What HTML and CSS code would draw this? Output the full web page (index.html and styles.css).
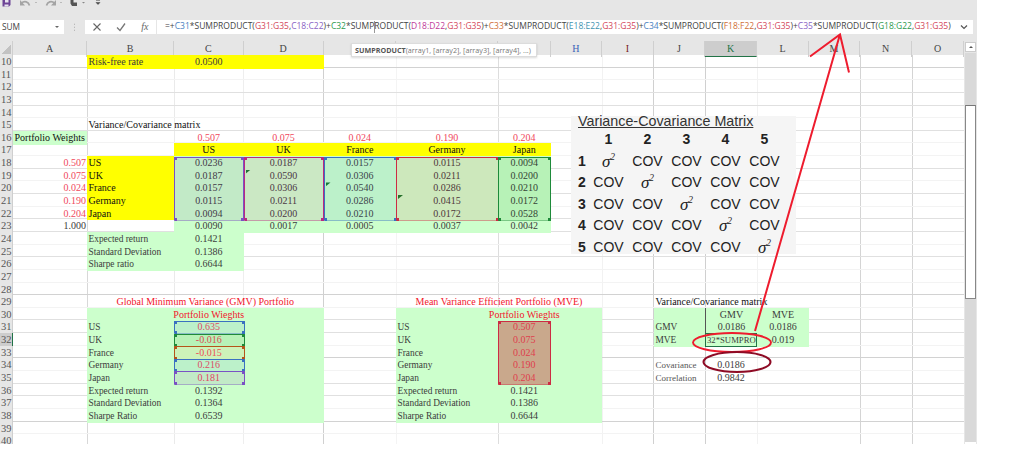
FILE: index.html
```html
<!DOCTYPE html>
<html lang="en">
<head>
<meta charset="utf-8">
<title>Portfolio workbook</title>
<link rel="stylesheet" href="styles.css">
</head>
<body>
<div class="app">
  <header class="chrome">
    <div class="quick-bar">
      <svg class="qa-icons" width="110" height="8" viewBox="0 0 110 8">
        <path d="M2.500 0h8v5l-1.500 1.500H2.500z" fill="#6d4496"/><path d="M5 0h3.500v2.500H5zM4.500 4.500h4v2h-4z" fill="#e8e4ee"/>
        <path d="M21.500 3c3-2.500 7-1.500 8 2.500" fill="none" stroke="#a4a4a4" stroke-width="1.700"/><path d="M20 0v5.500h5z" fill="#a4a4a4"/>
        <path d="M35 2.500h2" stroke="#bbb"/>
        <path d="M54.500 3c-3-2.500-7-1.500-8 2.500" fill="none" stroke="#a4a4a4" stroke-width="1.700"/><path d="M56 0v5.500h-5z" fill="#a4a4a4"/>
        <path d="M60 2.500h2" stroke="#bbb"/>
        <path d="M70.500 0h3v2.500h3.500v3.500h-5l-1.500-2.500z" fill="#555"/><path d="M82 2h3l-1.500 1.500z" fill="#888"/>
        <path d="M96 .500h4M96 2.500h4l-2 2z" fill="#444" stroke="#444" stroke-width=".5"/>
      </svg>
    </div>
    <div class="formula-row">
      <div class="name-box"><span>SUM</span><i class="caret-down"></i></div>
      <div class="grip"></div>
      <div class="fx-box">
        <svg width="10" height="10" viewBox="0 0 10 10"><path d="M1.500 1.500l7 7M8.500 1.500l-7 7" stroke="#666" stroke-width="1.100"/></svg>
        <svg width="10" height="10" viewBox="0 0 10 10"><path d="M1 5.500l3 3 5-7" fill="none" stroke="#777" stroke-width="1.300"/></svg>
        <span class="fx">fx</span>
      </div>
      <div class="formula"><span class="formula-text">=+<span class="f-blue">C31</span>*SUMPRODUCT(<span class="f-red">G31:G35</span>,<span class="f-purple">C18:C22</span>)+<span class="f-green">C32</span>*SUMP<i class="caret"></i>RODUCT(<span class="f-pink">D18:D22</span>,<span class="f-red">G31:G35</span>)+<span class="f-orange">C33</span>*SUMPRODUCT(<span class="f-teal">E18:E22</span>,<span class="f-red">G31:G35</span>)+<span class="f-blue">C34</span>*SUMPRODUCT(<span class="f-orange">F18:F22</span>,<span class="f-red">G31:G35</span>)+<span class="f-purple">C35</span>*SUMPRODUCT(<span class="f-green">G18:G22</span>,<span class="f-red">G31:G35</span>)</span>
        <svg class="chev" width="8" height="6" viewBox="0 0 8 6"><path d="M1 1.500l3 3 3-3" fill="none" stroke="#555" stroke-width="1.200"/></svg>
      </div>
    </div>
  </header>

  <div class="workspace">
    <main class="sheet">
      <div class="col-heads">
        <div class="corner"></div>
        <div>A</div><div>B</div><div>C</div><div>D</div><div></div><div></div><div></div><div class="h-blue">H</div><div class="h-red">I</div><div>J</div><div class="selected">K</div><div>L</div><div>M</div><div>N</div><div>O</div>
      </div>

      <div class="row line-s"><div class="rh">10</div><div class="cell col-b yellow">Risk-free rate</div><div class="cell col-c yellow num">0.0500</div><div class="cell col-d yellow"></div></div>
      <div class="row line-f"><div class="rh">11</div></div>
      <div class="row line-m"><div class="rh">12</div></div>
      <div class="row line-m"><div class="rh">13</div></div>
      <div class="row line-f"><div class="rh">14</div></div>
      <div class="row line-m"><div class="rh">15</div><div class="cell col-b dark">Variance/Covariance matrix</div></div>
      <div class="row line-f"><div class="rh">16</div><div class="cell col-a green dark">Portfolio Weights</div><div class="cell col-c num red">0.507</div><div class="cell col-d num red">0.075</div><div class="cell col-e num red">0.024</div><div class="cell col-f num red">0.190</div><div class="cell col-g num red">0.204</div></div>
      <div class="row line-f"><div class="rh">17</div><div class="cell col-c yellow num dark">US</div><div class="cell col-d yellow num dark">UK</div><div class="cell col-e yellow num dark">France</div><div class="cell col-f yellow num dark">Germany</div><div class="cell col-g yellow num dark">Japan</div></div>
      <div class="row line-m"><div class="rh">18</div><div class="cell col-a end red">0.507</div><div class="cell col-b yellow dark">US</div><div class="cell col-c green num">0.0236</div><div class="cell col-d green num">0.0187</div><div class="cell col-e green num">0.0157</div><div class="cell col-f green num">0.0115</div><div class="cell col-g green num">0.0094</div></div>
      <div class="row line-f"><div class="rh">19</div><div class="cell col-a end red">0.075</div><div class="cell col-b yellow dark">UK</div><div class="cell col-c green num">0.0187</div><div class="cell col-d green num flag">0.0590</div><div class="cell col-e green num">0.0306</div><div class="cell col-f green num">0.0211</div><div class="cell col-g green num">0.0200</div></div>
      <div class="row line-m"><div class="rh">20</div><div class="cell col-a end red">0.024</div><div class="cell col-b yellow dark">France</div><div class="cell col-c green num">0.0157</div><div class="cell col-d green num">0.0306</div><div class="cell col-e green num flag">0.0540</div><div class="cell col-f green num">0.0286</div><div class="cell col-g green num">0.0210</div></div>
      <div class="row line-f"><div class="rh">21</div><div class="cell col-a end red">0.190</div><div class="cell col-b yellow dark">Germany</div><div class="cell col-c green num">0.0115</div><div class="cell col-d green num">0.0211</div><div class="cell col-e green num">0.0286</div><div class="cell col-f green num flag">0.0415</div><div class="cell col-g green num">0.0172</div></div>
      <div class="row line-m"><div class="rh">22</div><div class="cell col-a end red">0.204</div><div class="cell col-b yellow dark">Japan</div><div class="cell col-c green num">0.0094</div><div class="cell col-d green num">0.0200</div><div class="cell col-e green num">0.0210</div><div class="cell col-f green num">0.0172</div><div class="cell col-g green num">0.0528</div></div>
      <div class="row line-m"><div class="rh">23</div><div class="cell col-a end">1.000</div><div class="cell col-c green num">0.0090</div><div class="cell col-d green num">0.0017</div><div class="cell col-e green num">0.0005</div><div class="cell col-f green num">0.0037</div><div class="cell col-g green num">0.0042</div></div>
      <div class="row line-f"><div class="rh">24</div><div class="cell col-b green">Expected return</div><div class="cell col-c green num">0.1421</div></div>
      <div class="row line-m"><div class="rh">25</div><div class="cell col-b green">Standard Deviation</div><div class="cell col-c green num">0.1386</div></div>
      <div class="row line-f"><div class="rh">26</div><div class="cell col-b green">Sharpe ratio</div><div class="cell col-c green num">0.6644</div></div>
      <div class="row line-f"><div class="rh">27</div></div>
      <div class="row line-s"><div class="rh">28</div></div>
      <div class="row line-f"><div class="rh">29</div><div class="cell span-bd num red">Global Minimum Variance (GMV) Portfolio</div><div class="cell span-fh num red">Mean Variance Efficient Portfolio (MVE)</div><div class="cell col-j dark">Variance/Covariance matrix</div></div>
      <div class="row line-m"><div class="rh">30</div><div class="cell col-b green"></div><div class="cell col-c green num bright">Portfolio Wieghts</div><div class="cell col-d green"></div><div class="cell col-f green"></div><div class="cell col-g green num bright">Portfolio Wieghts</div><div class="cell col-h green"></div><div class="cell col-j green rule-b"></div><div class="cell col-k green num rule-b rule-l">GMV</div><div class="cell col-l green num rule-b">MVE</div></div>
      <div class="row line-m"><div class="rh">31</div><div class="cell col-b green">US</div><div class="cell col-c green num red">0.635</div><div class="cell col-d green"></div><div class="cell col-f green">US</div><div class="cell col-g green num red">0.507</div><div class="cell col-h green"></div><div class="cell col-j green">GMV</div><div class="cell col-k green num rule-l">0.0186</div><div class="cell col-l green num">0.0186</div></div>
      <div class="row line-f"><div class="rh rh-selected">32</div><div class="cell col-b green">UK</div><div class="cell col-c green num red">-0.016</div><div class="cell col-d green"></div><div class="cell col-f green">UK</div><div class="cell col-g green num red">0.075</div><div class="cell col-h green"></div><div class="cell col-j green">MVE</div><div class="cell col-k green active">32*SUMPRO</div><div class="cell col-l green num">0.019</div></div>
      <div class="row line-s"><div class="rh">33</div><div class="cell col-b green">France</div><div class="cell col-c green num red">-0.015</div><div class="cell col-d green"></div><div class="cell col-f green">France</div><div class="cell col-g green num red">0.024</div><div class="cell col-h green"></div></div>
      <div class="row line-f"><div class="rh">34</div><div class="cell col-b green">Germany</div><div class="cell col-c green num red">0.216</div><div class="cell col-d green"></div><div class="cell col-f green">Germany</div><div class="cell col-g green num red">0.190</div><div class="cell col-h green"></div><div class="cell col-j note">Covariance</div><div class="cell col-k num">0.0186</div></div>
      <div class="row line-m"><div class="rh">35</div><div class="cell col-b green">Japan</div><div class="cell col-c green num red">0.181</div><div class="cell col-d green"></div><div class="cell col-f green">Japan</div><div class="cell col-g green num red">0.204</div><div class="cell col-h green"></div><div class="cell col-j note">Correlation</div><div class="cell col-k num">0.9842</div></div>
      <div class="row line-m"><div class="rh">36</div><div class="cell col-b green">Expected return</div><div class="cell col-c green num">0.1392</div><div class="cell col-d green"></div><div class="cell col-f green">Expected return</div><div class="cell col-g green num">0.1421</div><div class="cell col-h green"></div></div>
      <div class="row line-f"><div class="rh">37</div><div class="cell col-b green">Standard Deviation</div><div class="cell col-c green num">0.1364</div><div class="cell col-d green"></div><div class="cell col-f green">Standard Deviation</div><div class="cell col-g green num">0.1386</div><div class="cell col-h green"></div></div>
      <div class="row line-s"><div class="rh">38</div><div class="cell col-b green">Sharpe Ratio</div><div class="cell col-c green num">0.6539</div><div class="cell col-d green"></div><div class="cell col-f green">Sharpe Ratio</div><div class="cell col-g green num">0.6644</div><div class="cell col-h green"></div></div>
      <div class="row line-f"><div class="rh">39</div></div>
      <div class="row line-f"><div class="rh">40</div></div>

      <div class="range r-purple rng-c18"></div>
      <div class="range r-pink rng-d18"></div>
      <div class="range r-blue rng-e18"></div>
      <div class="range r-red rng-f18"></div>
      <div class="range r-green rng-g18"></div>
      <div class="range r-blue rng-c31"></div>
      <div class="range r-green rng-c32"></div>
      <div class="range r-orange rng-c33"></div>
      <div class="range r-blue rng-c34"></div>
      <div class="range r-purple rng-c35"></div>
      <div class="range r-brown rng-g31"></div>
    </main>
    <aside class="scrollbar">
      <div class="sb-up"><i></i></div>
      <div class="sb-track"><div class="sb-thumb"></div></div>
      <div class="sb-down"></div>
    </aside>
  </div>

  <div class="tooltip"><b>SUMPRODUCT</b>(array1, [array2], [array3], [array4], ...)</div>

  <figure class="picture">
    <figcaption>Variance-Covariance Matrix</figcaption>
    <div class="matrix">
      <b></b><b>1</b><b>2</b><b>3</b><b>4</b><b>5</b>
      <b>1</b><i>σ<sup>2</sup></i><span>COV</span><span>COV</span><span>COV</span><span>COV</span>
      <b>2</b><span>COV</span><i>σ<sup>2</sup></i><span>COV</span><span>COV</span><span>COV</span>
      <b>3</b><span>COV</span><span>COV</span><i>σ<sup>2</sup></i><span>COV</span><span>COV</span>
      <b>4</b><span>COV</span><span>COV</span><span>COV</span><i>σ<sup>2</sup></i><span>COV</span>
      <b>5</b><span>COV</span><span>COV</span><span>COV</span><span>COV</span><i>σ<sup>2</sup></i>
    </div>
  </figure>

  <svg class="annotations" width="1024" height="467" viewBox="0 0 1024 467">
    <ellipse cx="732" cy="342.500" rx="39" ry="9.500" fill="none" stroke="#ee1c2e" stroke-width="1.900"/>
    <ellipse cx="737" cy="362" rx="33.500" ry="10" fill="none" stroke="#8e0b25" stroke-width="2.100"/>
    <path d="M755 331L839.500 36M810 56.500L840 34.500L849 72.500" fill="none" stroke="#ee1c2e" stroke-width="2"/>
  </svg>
</div>
</body>
</html>
```
FILE: styles.css
```css
* { box-sizing: border-box; }
html, body { margin: 0; padding: 0; }
body { width: 1024px; height: 467px; overflow: hidden; background: #fff; font-family: "Liberation Serif", "Times New Roman", serif; }

.app { position: relative; width: 1024px; height: 467px; }

/* ribbon fragments */
.chrome { width: 977px; height: 41px; background: #e6e6e6; display: flex; flex-direction: column; }
.quick-bar { height: 19.500px; }
.qa-icons { display: block; }
.formula-row { display: flex; align-items: stretch; height: 14.500px; font-family: "Open Sans", "Noto Sans", sans-serif; font-size: 8.300px; color: #444; }
.name-box { width: 64px; background: #fff; display: flex; align-items: center; justify-content: space-between; padding: 0 5px 0 2px; }
.caret-down { width: 0; height: 0; border: 2px solid transparent; border-top-color: #666; margin-top: 2px; }
.grip { width: 20.500px; background: radial-gradient(circle, #aaa 0.600px, transparent 0.800px) center / 3px 3px repeat-y; margin: 3px 0; }
.fx-box { width: 71px; background: #fff; display: flex; align-items: center; justify-content: space-between; padding: 0 7px 0 7px; }
.fx { font-family: "Liberation Serif", serif; font-style: italic; font-size: 10px; color: #666; }
.formula { width: 816px; margin-left: 1.500px; background: #fff; display: flex; align-items: center; justify-content: space-between; padding: 0 5px 0 8px; }
.formula-text { white-space: nowrap; font-size: 8.510px; }
.caret { display: inline-block; width: 0; height: 12px; border-left: 1px solid #999; vertical-align: middle; margin-right: -1px; }
.f-blue { color: #4a7fc1; } .f-red { color: #d3475a; } .f-purple { color: #8a63c4; }
.f-green { color: #2e9a50; } .f-pink { color: #c0399a; } .f-orange { color: #d0703a; } .f-teal { color: #3f93b0; }

/* sheet */
.workspace { display: flex; width: 977px; height: 403px; background: #e6e6e6; }
.sheet {
  position: relative; width: 964px; height: 403px; overflow: hidden; background-color: #fff;
  background-image:
    linear-gradient(#d8d8d8, #d8d8d8), linear-gradient(#eaeaea, #eaeaea), linear-gradient(#eee, #eee), linear-gradient(#d0d0d0, #d0d0d0),
    linear-gradient(#f4f4f4, #f4f4f4), linear-gradient(#ddd, #ddd), linear-gradient(#d0d0d0, #d0d0d0), linear-gradient(#d0d0d0, #d0d0d0),
    linear-gradient(#f2f2f2, #f2f2f2), linear-gradient(#f2f2f2, #f2f2f2), linear-gradient(#d4d4d4, #d4d4d4), linear-gradient(#d4d4d4, #d4d4d4);
  background-repeat: no-repeat;
  background-size: 1px 100%;
  background-position: 86.500px 0, 173.500px 0, 243px 0, 323px 0, 395.500px 0, 498px 0, 653px 0, 705px 0, 601.500px 0, 757px 0, 860px 0, 912px 0;
}
.col-heads, .row {
  display: grid;
  grid-template-columns: 13px 74px 87px 69.500px 80px 72.500px 102px 52.500px 51.500px 52px 51px 52px 52px 51px 52px 52px;
}
.col-heads { height: 14px; background: #e6e6e6; font-size: 10px; line-height: 15px; color: #444; text-align: center; }
.col-heads > div { border-right: 1px solid #cfcfcf; }
.col-heads .corner { background: linear-gradient(135deg, transparent 50%, #c2c2c2 50%) 2px 3px / 9px 10px no-repeat; }
.col-heads .selected { background: #cdcdcd; border-bottom: 1px solid #217346; color: #217346; }
.h-blue { color: #3a62b8; } .h-red { color: #7a1a1a; }

.row {
  height: 12.650px; font-size: 10px; line-height: 12.650px; color: #3c3c3c;
  background: linear-gradient(var(--line), var(--line)) left bottom / 100% 1px no-repeat;
}
.line-s { --line: #d2d2d2; } .line-m { --line: #e0e0e0; } .line-f { --line: #f3f3f3; }
.rh { grid-column: 1; background: #e6e6e6; color: #555; font-size: 10.500px; padding: 1px 0 0 1px; white-space: nowrap; overflow: hidden; border-right: 1px solid #cfcfcf; }
.rh-selected { background: #cdcdcd; border-right: 1px solid #217346; }

.cell { position: relative; padding: 1px 1.500px 0; white-space: nowrap; }
.col-a { grid-column: 2; } .col-b { grid-column: 3; } .col-c { grid-column: 4; } .col-d { grid-column: 5; } .col-e { grid-column: 6; }
.col-f { grid-column: 7; } .col-g { grid-column: 8; } .col-h { grid-column: 9; } .col-j { grid-column: 11; } .col-k { grid-column: 12; } .col-l { grid-column: 13; }
.span-bd { grid-column: 3 / 6; } .span-fh { grid-column: 7 / 10; }
.num { display: flex; justify-content: center; }
.end { text-align: right; padding-right: 1px; }
.yellow { background: #ffff00; }
.green { background: #ccffcc; }
.green:not(.num):not(.dark) { font-size: 9.400px; }
.dark { color: #111; }
.red { color: #f0485c; }
.bright { color: #f2152c; z-index: 1; }
.note { font-size: 9px; color: #555; }
.span-bd.red, .span-fh.red { color: #f2152c; }
.rule-b { box-shadow: inset 0 -1px 0 #555; }
.rule-l { border-left: 1px solid #555; }
.active { overflow: hidden; outline: 1px solid #217346; outline-offset: -1px; background: #ccffcc; }
.green.active:not(.num):not(.dark) { font-size: 8.700px; padding-left: 2px; padding-right: 0; }
.flag::before { content: ""; position: absolute; left: 2px; top: 1px; width: 5px; height: 4px; background: #147a2c; clip-path: polygon(0 0, 100% 0, 0 100%); }

/* formula reference ranges */
.range {
  position: absolute; border: 1px solid var(--c); pointer-events: none;
  border-bottom-color: color-mix(in srgb, var(--c) 40%, transparent);
  background-image: linear-gradient(var(--c), var(--c)), linear-gradient(var(--c), var(--c)), linear-gradient(var(--c), var(--c)), linear-gradient(var(--c), var(--c));
  background-size: 3px 3px; background-repeat: no-repeat;
  background-position: -1px -1px, calc(100% + 1px) -1px, -1px calc(100% + 1px), calc(100% + 1px) calc(100% + 1px);
  background-color: var(--t);
  background-origin: padding-box;
}
.r-purple { --c: #7a50c4; --t: rgba(112, 48, 160, .1); }
.r-pink { --c: #b92a80; --t: rgba(192, 32, 128, .1); }
.r-blue { --c: #3a70c0; --t: rgba(46, 117, 182, .1); }
.r-red { --c: #cc2c44; --t: rgba(220, 30, 50, .1); }
.r-green { --c: #1e8a3a; --t: rgba(0, 128, 0, .1); }
.r-orange { --c: #b5541a; --t: rgba(220, 130, 20, .1); }
.r-brown { --c: #cc2c44; --t: rgba(197, 53, 56, .43); }
.rng-c18, .rng-d18, .rng-e18, .rng-f18, .rng-g18 { top: 115.500px; height: 64px; }
.rng-c18 { left: 173.500px; width: 70.500px; }
.rng-d18 { left: 243.500px; width: 80.500px; }
.rng-e18 { left: 323.500px; width: 73px; }
.rng-f18 { left: 396px; width: 102.500px; }
.rng-g18 { left: 498px; width: 53px; }
.rng-c31, .rng-c32, .rng-c33, .rng-c34, .rng-c35 { left: 173.500px; width: 71px; }
.rng-c31 { top: 279.500px; height: 13.500px; }
.rng-c32 { top: 292.500px; height: 13.500px; }
.rng-c33 { top: 305px; height: 13.500px; }
.rng-c34 { top: 317.500px; height: 13.500px; }
.rng-c35 { top: 330px; height: 13.500px; }
.rng-g31 { top: 279.500px; left: 498px; width: 53px; height: 64px; }

/* scrollbar */
.scrollbar { width: 13px; height: 403px; padding: 1px 1px 0; background: #e6e6e6; display: flex; flex-direction: column; }
.sb-up { height: 10px; background: #fff; border: 1px solid #ccc; display: flex; justify-content: center; align-items: center; }
.sb-up i { width: 0; height: 0; border: 2.500px solid transparent; border-top: 0; border-bottom-color: #555; }
.sb-track { flex: 1; background: #d9d9d9; padding-top: 52px; margin-top: 1px; }
.sb-thumb { height: 194px; background: #fff; border: 1px solid #888; border-top-color: #777; }
.sb-down { height: 2px; background: #fff; margin-bottom: 0; }

/* overlays */
.tooltip {
  position: absolute; left: 351px; top: 42.500px; width: 186px; height: 14px; padding: 0 3px; background: #fff; border: 1px solid #dcdcdc;
  box-shadow: 0 1px 2px rgba(0,0,0,.15); font-family: "Open Sans", "Noto Sans", sans-serif; font-size: 7.200px; line-height: 12px; color: #777; white-space: nowrap;
}
.tooltip b { color: #555; }

.picture { position: absolute; left: 571px; top: 116px; width: 225px; height: 138px; margin: 0; background: #f5f5f5; font-family: "Liberation Sans", Arial, sans-serif; color: #222; }
.picture figcaption { font-size: 14.300px; line-height: 16px; padding-left: 7px; text-decoration: underline; color: #333; white-space: nowrap; margin-top: -3px; }
.matrix { display: grid; grid-template-columns: 14px repeat(5, 39px); grid-auto-rows: 21.500px; margin-top: 0; padding-left: 4px; font-size: 14px; line-height: 21.500px; text-align: center; }
.matrix i { font-family: "Liberation Serif", serif; font-size: 17px; }
.matrix sup { font-size: 9.500px; line-height: 0; }

.annotations { position: absolute; left: 0; top: 0; pointer-events: none; }
```
